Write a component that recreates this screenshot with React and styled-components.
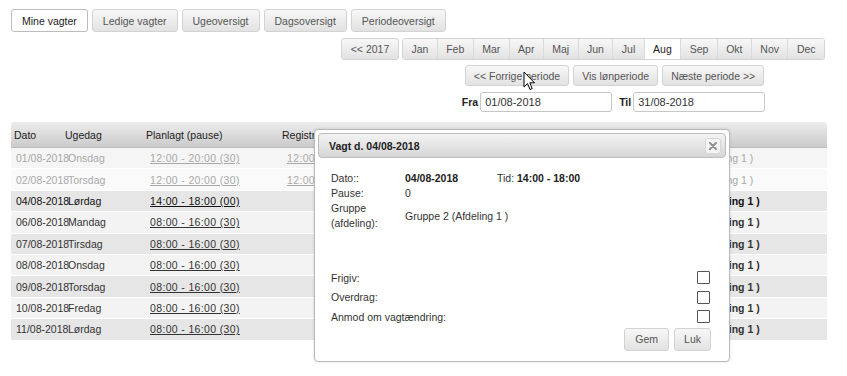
import React from 'react';
import styled, { createGlobalStyle, css } from 'styled-components';

const GlobalStyle = createGlobalStyle`
  html, body {
    margin: 0;
    padding: 0;
    background: #ffffff;
  }
  body {
    font-family: 'Liberation Sans', Arial, sans-serif;
    font-size: 10.5px;
    color: #333333;
    min-height: 376px;
  }
`;

const Page = styled.div`
  position: relative;
  width: 827px;
  min-height: 376px;
  box-sizing: border-box;
  padding: 9px 0 0 11px;
`;

const btnBase = css`
  background: linear-gradient(#f7f7f7, #e2e2e2);
  border: 1px solid #d2d2d2;
  border-radius: 3px;
  color: #555555;
  font-family: 'Liberation Sans', Arial, sans-serif;
  font-size: 10.5px;
  box-sizing: border-box;
  cursor: pointer;
`;

const TabRow = styled.div`
  display: flex;
  gap: 4px;
`;

const Tab = styled.button`
  ${btnBase};
  height: 23px;
  padding: 0 10px;
  ${(p) => p.$active && css`
    background: #ffffff;
    border-color: #bcbcbc;
    color: #222222;
  `}
`;

const Nav = styled.div`
  display: flex;
  justify-content: flex-end;
  gap: 3px;
  margin-top: 6px;
  padding-right: 2px;
`;

const YearBtn = styled.button`
  ${btnBase};
  height: 22px;
  width: 58px;
`;

const NavColumn = styled.div`
  width: 423px;
  display: flex;
  flex-direction: column;
  align-items: center;
`;

const MonthGroup = styled.div`
  display: flex;
  width: 100%;
  height: 22px;
  border: 1px solid #d2d2d2;
  border-radius: 3px;
  box-sizing: border-box;
  overflow: hidden;
`;

const Month = styled.button`
  flex: 1 1 auto;
  background: linear-gradient(#f7f7f7, #e2e2e2);
  border: none;
  border-left: 1px solid #d9d9d9;
  color: #555555;
  font-family: 'Liberation Sans', Arial, sans-serif;
  font-size: 10.5px;
  padding: 0;
  &:first-child {
    border-left: none;
  }
  ${(p) => p.$active && css`
    background: #ffffff;
    color: #222222;
  `}
`;

const PeriodRow = styled.div`
  display: flex;
  gap: 4px;
  margin-top: 5px;
  margin-left: 2px;
`;

const PeriodBtn = styled.button`
  ${btnBase};
  height: 21px;
  padding: 0 8px;
`;

const DateRow = styled.div`
  display: flex;
  align-items: center;
  margin-top: 6px;
`;

const DateLabel = styled.label`
  font-weight: bold;
  color: #222222;
  margin: 0 2px 0 ${(p) => p.$gap || 0}px;
`;

const DateInput = styled.input`
  width: 132px;
  height: 20px;
  box-sizing: border-box;
  border: 1px solid #c6c6c6;
  border-radius: 3px;
  padding: 0 4px;
  font-family: 'Liberation Sans', Arial, sans-serif;
  font-size: 11px;
  color: #333333;
`;

const Table = styled.div`
  margin-top: 10px;
  width: 816px;
`;

const cols = '51px 81px 136px 366px 1fr';

const HeadRow = styled.div`
  display: grid;
  grid-template-columns: ${cols};
  height: 26px;
  align-items: center;
  background: linear-gradient(#ececec, #cbcbcb);
  border-bottom: 1px solid #bdbdbd;
  border-radius: 3px 3px 0 0;
  box-sizing: border-box;
  color: #222222;
`;

const HeadCell = styled.div`
  padding-left: 3px;
  white-space: nowrap;
`;

const Row = styled.div`
  display: grid;
  grid-template-columns: ${cols};
  height: 21.4px;
  align-items: center;
  border-bottom: 1px solid #ffffff;
  box-sizing: border-box;
  background: ${(p) => p.$bg};
  color: ${(p) => (p.$past ? '#a9a9a9' : p.$today ? '#111111' : '#333333')};
`;

const Cell = styled.div`
  padding-left: ${(p) => p.$pad ?? 5}px;
  white-space: nowrap;
  font-weight: ${(p) => (p.$bold ? 'bold' : 'normal')};
`;

const TimeLink = styled.a`
  color: inherit;
  text-decoration: underline;
  letter-spacing: 0.35px;
`;

const Modal = styled.div`
  position: absolute;
  left: 314px;
  top: 129px;
  width: 416px;
  height: 233px;
  box-sizing: border-box;
  background: #ffffff;
  border: 1px solid #b9b9b9;
  border-radius: 4px;
  padding: 3px;
  box-shadow: 0 0 3px rgba(0, 0, 0, 0.12);
  display: flex;
  flex-direction: column;
  z-index: 2;
`;

const ModalTitle = styled.div`
  height: 25px;
  flex: none;
  display: flex;
  align-items: center;
  justify-content: space-between;
  padding: 0 4px 0 10px;
  background: linear-gradient(#f3f3f3, #d6d6d6);
  border: 1px solid #bdbdbd;
  border-radius: 4px;
  box-sizing: border-box;
  font-weight: bold;
  color: #222222;
`;

const CloseBtn = styled.span`
  width: 16px;
  height: 16px;
  border: 1px solid #d6d6d6;
  border-radius: 3px;
  background: #f4f4f4;
  display: flex;
  align-items: center;
  justify-content: center;
  box-sizing: border-box;
`;

const ModalBody = styled.div`
  flex: 1;
  padding: 13px 15px 0 13px;
  display: flex;
  flex-direction: column;
`;

const InfoRow = styled.div`
  display: grid;
  grid-template-columns: 74px 92px 1fr;
  align-items: center;
  line-height: 15px;
  color: #333333;
`;

const Strong = styled.span`
  font-weight: bold;
  color: #222222;
`;

const Wide = styled.span`
  grid-column: span 2;
`;

const Checks = styled.div`
  margin-top: 37px;
  display: flex;
  flex-direction: column;
`;

const CheckRow = styled.div`
  display: flex;
  justify-content: space-between;
  align-items: center;
  height: 19.5px;
  color: #333333;
`;

const Box = styled.span`
  width: 11px;
  height: 11px;
  border: 1px solid #555555;
  border-radius: 1px;
  background: #ffffff;
  margin-right: 1px;
`;

const Actions = styled.div`
  display: flex;
  justify-content: flex-end;
  gap: 5px;
  margin-top: 1px;
`;

const ActionBtn = styled.button`
  ${btnBase};
  height: 23px;
  padding: 0 ${(p) => p.$px}px;
`;

const Cursor = styled.svg`
  position: absolute;
  left: 523px;
  top: 71px;
  z-index: 3;
`;

const months = ['Jan', 'Feb', 'Mar', 'Apr', 'Maj', 'Jun', 'Jul', 'Aug', 'Sep', 'Okt', 'Nov', 'Dec'];

const rows = [
  { date: '01/08-2018', day: 'Onsdag', plan: '12:00 - 20:00 (30)', reg: '12:00', past: true, bg: '#f5f5f5' },
  { date: '02/08-2018', day: 'Torsdag', plan: '12:00 - 20:00 (30)', reg: '12:00', past: true, bg: '#fafafa' },
  { date: '04/08-2018', day: 'Lørdag', plan: '14:00 - 18:00 (00)', today: true, bg: '#e6e6e6' },
  { date: '06/08-2018', day: 'Mandag', plan: '08:00 - 16:00 (30)', bg: '#f3f3f3' },
  { date: '07/08-2018', day: 'Tirsdag', plan: '08:00 - 16:00 (30)', bg: '#e6e6e6' },
  { date: '08/08-2018', day: 'Onsdag', plan: '08:00 - 16:00 (30)', bg: '#f3f3f3' },
  { date: '09/08-2018', day: 'Torsdag', plan: '08:00 - 16:00 (30)', bg: '#e6e6e6' },
  { date: '10/08-2018', day: 'Fredag', plan: '08:00 - 16:00 (30)', bg: '#f3f3f3' },
  { date: '11/08-2018', day: 'Lørdag', plan: '08:00 - 16:00 (30)', bg: '#e6e6e6' },
];

const App = () => {
  return (
    <>
      <GlobalStyle />
      <Page>
        <TabRow>
          <Tab $active>Mine vagter</Tab>
          <Tab>Ledige vagter</Tab>
          <Tab>Ugeoversigt</Tab>
          <Tab>Dagsoversigt</Tab>
          <Tab>Periodeoversigt</Tab>
        </TabRow>

        <Nav>
          <YearBtn>&lt;&lt; 2017</YearBtn>
          <NavColumn>
            <MonthGroup>
              {months.map((m) => (
                <Month key={m} $active={m === 'Aug'}>{m}</Month>
              ))}
            </MonthGroup>
            <PeriodRow>
              <PeriodBtn>&lt;&lt; Forrige periode</PeriodBtn>
              <PeriodBtn>Vis lønperiode</PeriodBtn>
              <PeriodBtn>Næste periode &gt;&gt;</PeriodBtn>
            </PeriodRow>
            <DateRow>
              <DateLabel>Fra</DateLabel>
              <DateInput defaultValue="01/08-2018" />
              <DateLabel $gap={7}>Til</DateLabel>
              <DateInput defaultValue="31/08-2018" />
            </DateRow>
          </NavColumn>
        </Nav>

        <Table>
          <HeadRow>
            <HeadCell>Dato</HeadCell>
            <HeadCell>Ugedag</HeadCell>
            <HeadCell>Planlagt (pause)</HeadCell>
            <HeadCell>Registreret</HeadCell>
            <HeadCell>Gruppe</HeadCell>
          </HeadRow>
          {rows.map((r) => (
            <Row key={r.date} $bg={r.bg} $past={r.past} $today={r.today}>
              <Cell>{r.date}</Cell>
              <Cell $pad={6}>{r.day}</Cell>
              <Cell $pad={7}><TimeLink href="#">{r.plan}</TimeLink></Cell>
              <Cell $pad={8}>{r.reg && <TimeLink href="#">{r.reg}</TimeLink>}</Cell>
              <Cell $bold={!r.past}>Gruppe 2 (Afdeling 1 )</Cell>
            </Row>
          ))}
        </Table>

        <Modal>
          <ModalTitle>
            Vagt d. 04/08-2018
            <CloseBtn>
              <svg width="8" height="8" viewBox="0 0 8 8">
                <path d="M1 1L7 7M7 1L1 7" stroke="#8f8f8f" strokeWidth="2" strokeLinecap="round" />
              </svg>
            </CloseBtn>
          </ModalTitle>
          <ModalBody>
            <InfoRow>
              <span>Dato::</span>
              <Strong>04/08-2018</Strong>
              <span>Tid: <Strong>14:00 - 18:00</Strong></span>
            </InfoRow>
            <InfoRow>
              <span>Pause:</span>
              <span>0</span>
            </InfoRow>
            <InfoRow>
              <span>Gruppe<br />(afdeling):</span>
              <Wide>Gruppe 2 (Afdeling 1 )</Wide>
            </InfoRow>
            <Checks>
              <CheckRow><span>Frigiv:</span><Box /></CheckRow>
              <CheckRow><span>Overdrag:</span><Box /></CheckRow>
              <CheckRow><span>Anmod om vagtændring:</span><Box /></CheckRow>
            </Checks>
            <Actions>
              <ActionBtn $px={10}>Gem</ActionBtn>
              <ActionBtn $px={9}>Luk</ActionBtn>
            </Actions>
          </ModalBody>
        </Modal>

        <Cursor width="13" height="20" viewBox="0 0 13 20">
          <path d="M1 1 L1 16 L4.5 12.5 L7 18.5 L9.2 17.6 L6.8 11.8 L11.5 11.8 Z" fill="#ffffff" stroke="#000000" strokeWidth="1" strokeLinejoin="round" />
        </Cursor>
      </Page>
    </>
  );
};

export default App;
